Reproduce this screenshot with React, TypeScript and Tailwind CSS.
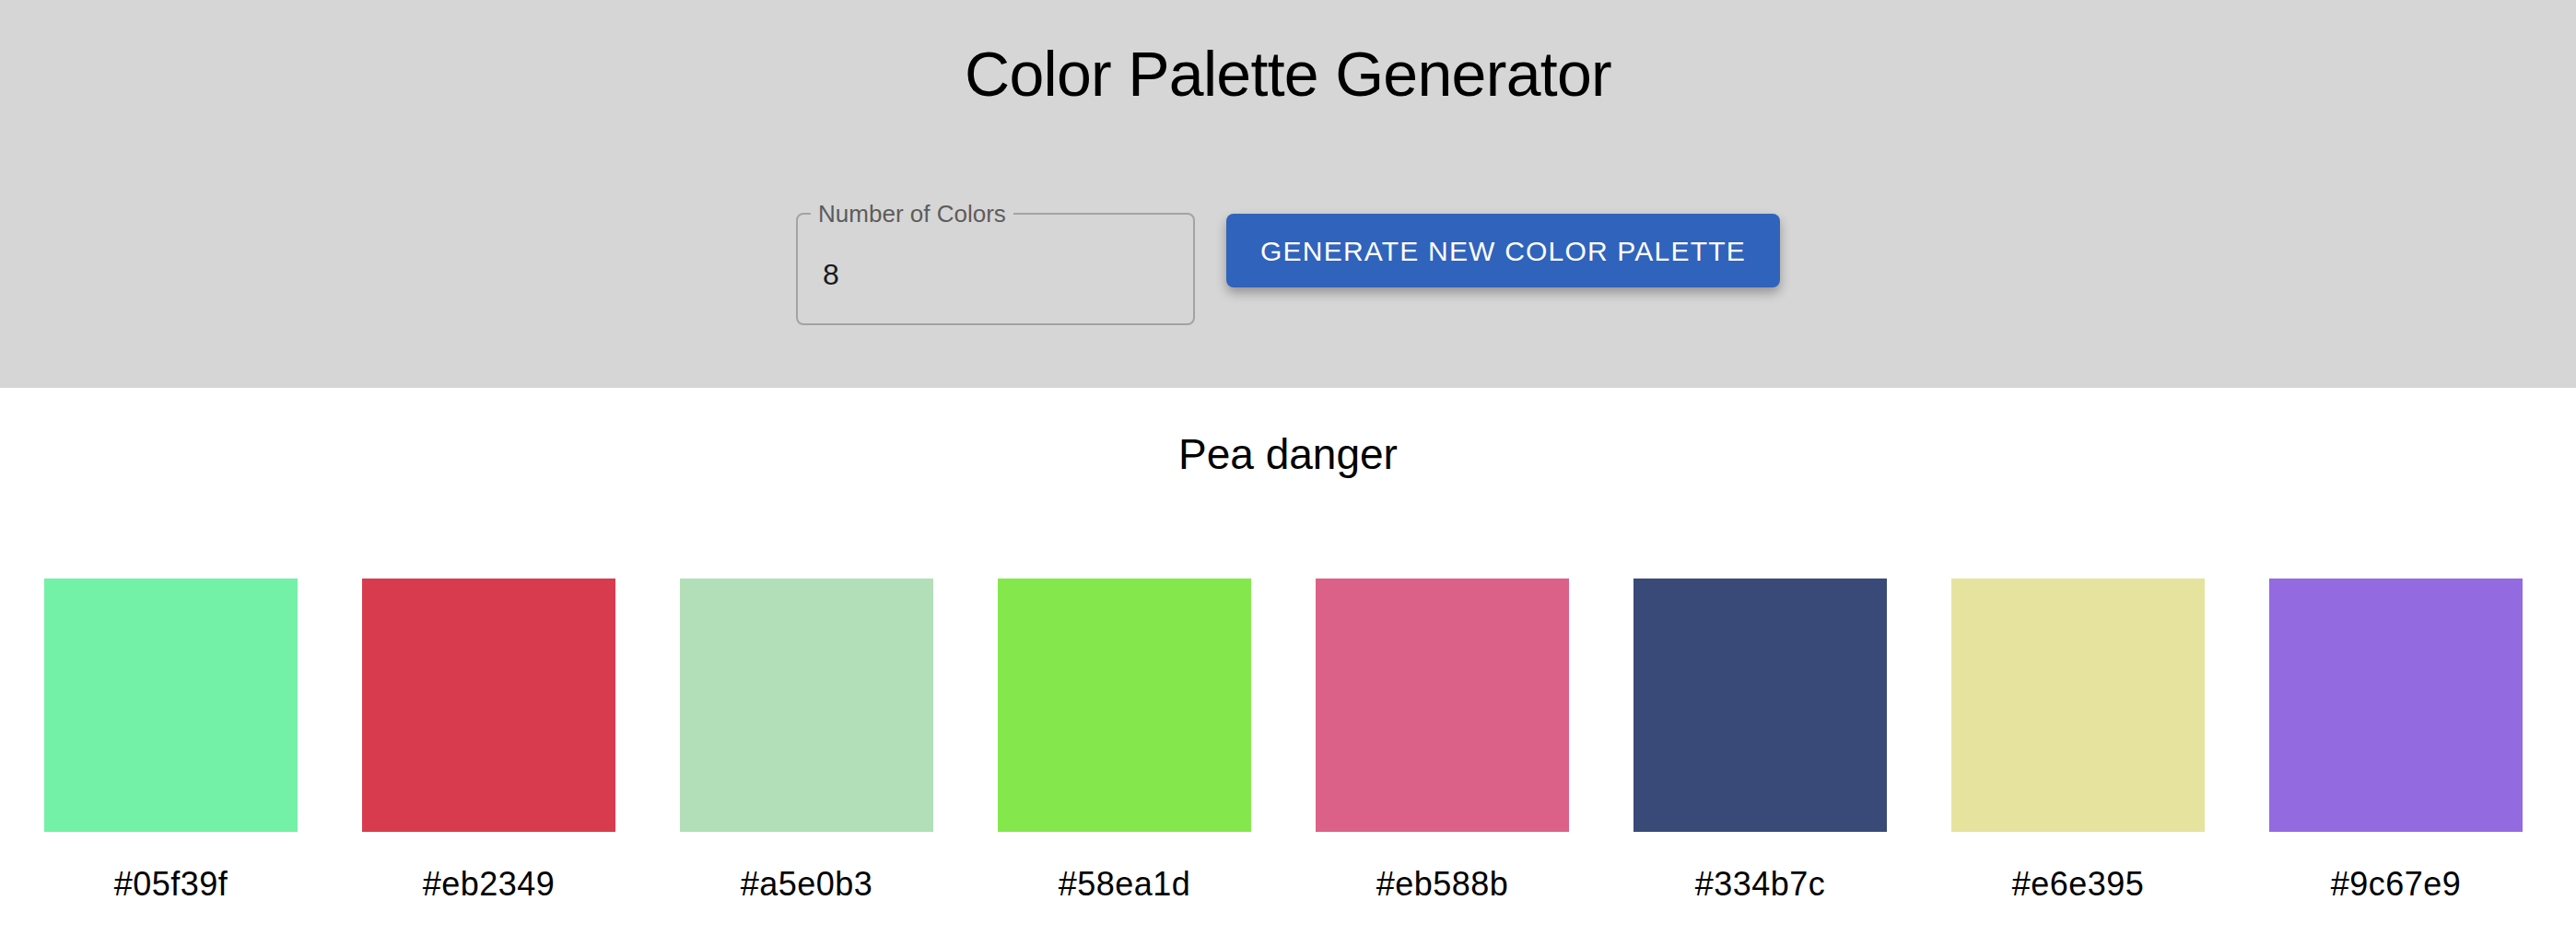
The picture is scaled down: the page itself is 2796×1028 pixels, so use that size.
const PALETTE = [
  { hex: "#05f39f", shown: "bg-[#73f1a7]" },
  { hex: "#eb2349", shown: "bg-[#d93b4e]" },
  { hex: "#a5e0b3", shown: "bg-[#b2dfb8]" },
  { hex: "#58ea1d", shown: "bg-[#84e84d]" },
  { hex: "#eb588b", shown: "bg-[#dc6189]" },
  { hex: "#334b7c", shown: "bg-[#394a78]" },
  { hex: "#e6e395", shown: "bg-[#e6e39e]" },
  { hex: "#9c67e9", shown: "bg-[#946ae1]" },
];

export default function App() {
  return (
    <div className="min-h-screen bg-white text-black font-['Liberation_Sans',Arial,sans-serif]">
      {/* Header */}
      <div className="bg-[#d6d6d6] h-[421px] flex flex-col items-center pt-[40px]">
        <h1 className="text-[68px] leading-[80px] font-normal tracking-[-0.7px]">
          Color Palette Generator
        </h1>

        <div className="flex items-start gap-[34px] mt-[112px]">
          {/* Outlined number field */}
          <div className="relative w-[433px] h-[121px]">
            <fieldset className="absolute inset-0 border-2 border-[#a3a3a3] rounded-[8px] px-[14px] m-0 -top-[12px]">
              <legend className="px-[8px] text-[26px] leading-[24px] text-[#5c5c5c]">
                Number of Colors
              </legend>
            </fieldset>
            <div className="absolute left-[29px] top-[46px] text-[32px] leading-[40px] text-[#1a1a1a]">
              8
            </div>
          </div>

          <button className="h-[80px] px-[37px] rounded-[8px] bg-[#3063bb] text-white text-[30px] tracking-[1.2px] uppercase shadow-[0_6px_12px_rgba(0,0,0,0.3)]">
            Generate New Color Palette
          </button>
        </div>
      </div>

      {/* Palette */}
      <div className="flex flex-col items-center pt-[44px]">
        <h2 className="text-[46px] leading-[56px] font-normal">Pea danger</h2>
      </div>

      <div className="flex gap-[70px] pl-[48px] mt-[107px]">
        {PALETTE.map((c) => (
          <div key={c.hex} className="flex flex-col items-center w-[275px]">
            <div className={`w-[275px] h-[275px] ${c.shown}`} />
            <p className="mt-[36px] text-[36px] leading-[42px] tracking-[0.5px]">{c.hex}</p>
          </div>
        ))}
      </div>
    </div>
  );
}
